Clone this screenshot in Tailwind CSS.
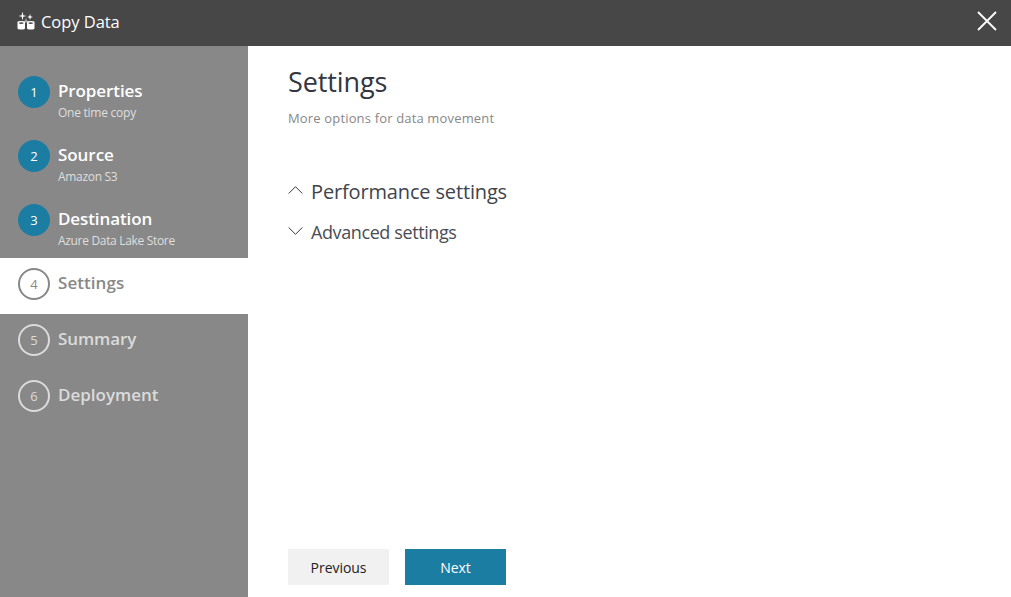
<!DOCTYPE html>
<html lang="en">
<head>
<meta charset="utf-8">
<title>Copy Data</title>
<script src="https://cdn.jsdelivr.net/npm/@tailwindcss/browser@4"></script>
</head>
<body class="flex h-[597px] w-[1011px] flex-col overflow-hidden bg-white font-['Open_Sans','Noto_Sans',sans-serif] text-[#32363f]">
  <header class="flex h-[46px] shrink-0 items-center bg-[#474747] pr-[13px] pl-[17px] text-white">
    <svg class="mt-[-4px] h-[20px] w-[18px]" viewBox="0 0 18 20" fill="currentColor">
      <path d="M5.500 .5 6.300 4.200 9.500 5 6.300 5.800 5.500 9.500 4.700 5.800 1.500 5 4.700 4.200Z"/>
      <path d="M13 3 13.700 5.300 15.800 6 13.700 6.700 13 9 12.300 6.700 10.200 6 12.300 5.300Z"/>
      <path d="M8.500 7.500h1v2h-1zM7.500 9.500h3v2h-3z" opacity=".6"/>
      <path fill-rule="evenodd" d="M.5 11Q.5 10 4.250 10T8 11V17.200Q8 18.500 4.250 18.500T.5 17.200ZM1.500 12Q4.250 14 7 12Q4.250 10.500 1.500 12Z"/>
      <path fill-rule="evenodd" d="M10 11Q10 10 13.750 10T17.500 11V17.200Q17.500 18.500 13.750 18.500T10 17.200ZM11 12Q13.750 14 16.500 12Q13.750 10.500 11 12Z"/>
    </svg>
    <span class="mt-[-2px] ml-[6px] text-[16.500px] leading-[22px] tracking-[-0.05px]">Copy Data</span>
    <svg class="mt-[-4px] ml-auto h-[22px] w-[22px]" viewBox="0 0 22 22" fill="none" stroke="currentColor" stroke-width="1.800"><path d="M2 2 20 20M20 2 2 20"/></svg>
  </header>
  <div class="flex min-h-0 flex-1">
    <nav class="w-[248px] shrink-0 bg-[#888] pt-[20px] text-white">
      <div class="flex h-[64px] gap-2 pt-[10px] pl-[18px]">
        <span class="flex size-8 items-center justify-center rounded-full bg-[#1b7da1] pt-px text-[13px]">1</span>
        <div><div class="mt-[3px] text-[17px] leading-[24px] font-semibold tracking-[-0.1px]">Properties</div><div class="mt-[1px] text-[12px] leading-[18px] tracking-[-0.25px] text-[#dfdfdf]">One time copy</div></div>
      </div>
      <div class="flex h-[64px] gap-2 pt-[10px] pl-[18px]">
        <span class="flex size-8 items-center justify-center rounded-full bg-[#1b7da1] pt-px text-[13px]">2</span>
        <div><div class="mt-[3px] text-[17px] leading-[24px] font-semibold tracking-[-0.05px]">Source</div><div class="mt-[1px] text-[12px] leading-[18px] tracking-[-0.3px] text-[#dfdfdf]">Amazon S3</div></div>
      </div>
      <div class="flex h-[64px] gap-2 pt-[10px] pl-[18px]">
        <span class="flex size-8 items-center justify-center rounded-full bg-[#1b7da1] pt-px text-[13px]">3</span>
        <div><div class="mt-[3px] text-[17px] leading-[24px] font-semibold tracking-[-0.1px]">Destination</div><div class="mt-[1px] text-[12px] leading-[18px] tracking-[-0.32px] text-[#dfdfdf]">Azure Data Lake Store</div></div>
      </div>
      <div class="flex h-[56px] gap-2 bg-white pt-[10px] pl-[18px] text-[#888]">
        <span class="flex size-8 items-center justify-center rounded-full border-2 border-[#888] pt-px text-[13px]">4</span>
        <div class="mt-[3px] text-[17px] leading-[24px] font-semibold tracking-[0.05px]">Settings</div>
      </div>
      <div class="flex h-[56px] gap-2 pt-[10px] pl-[18px] text-[#dbdbdb]">
        <span class="flex size-8 items-center justify-center rounded-full border-2 border-[#dbdbdb] pt-px text-[13px]">5</span>
        <div class="mt-[3px] text-[17px] leading-[24px] font-semibold tracking-[-0.1px]">Summary</div>
      </div>
      <div class="flex h-[56px] gap-2 pt-[10px] pl-[18px] text-[#dbdbdb]">
        <span class="flex size-8 items-center justify-center rounded-full border-2 border-[#dbdbdb] pt-px text-[13px]">6</span>
        <div class="mt-[3px] text-[17px] leading-[24px] font-semibold">Deployment</div>
      </div>
    </nav>
    <main class="flex flex-1 flex-col pt-[18px] pb-[12px] pl-[40px]">
      <h1 class="text-[27px] leading-[36px] tracking-[-0.1px]">Settings</h1>
      <p class="mt-[8px] text-[13px] leading-[20px] tracking-[0.16px] text-[#888]">More options for data movement</p>
      <div class="mt-[48px] flex h-[32px] items-center gap-2">
        <svg class="mt-[-4px] h-[10px] w-[15px]" viewBox="0 0 15 10" fill="none" stroke="currentColor"><path d="M.7 8.500 7.500 1.700 14.300 8.500"/></svg>
        <span class="text-[20px] leading-[28px] tracking-[-0.15px] text-[#40444c]">Performance settings</span>
      </div>
      <div class="mt-[8px] flex h-[32px] items-center gap-2">
        <svg class="mt-[-2px] h-[10px] w-[15px]" viewBox="0 0 15 10" fill="none" stroke="currentColor"><path d="M.7 1.500 7.500 8.300 14.300 1.500"/></svg>
        <span class="text-[18px] leading-[28px] tracking-[-0.4px] text-[#494d55]">Advanced settings</span>
      </div>
      <div class="mt-auto flex gap-4">
        <button class="h-[36px] w-[101px] bg-[#f1f1f1] text-[14px] tracking-[-0.05px] text-[#222]">Previous</button>
        <button class="h-[36px] w-[101px] bg-[#1b7da1] text-[14px] text-white">Next</button>
      </div>
    </main>
  </div>
</body>
</html>
